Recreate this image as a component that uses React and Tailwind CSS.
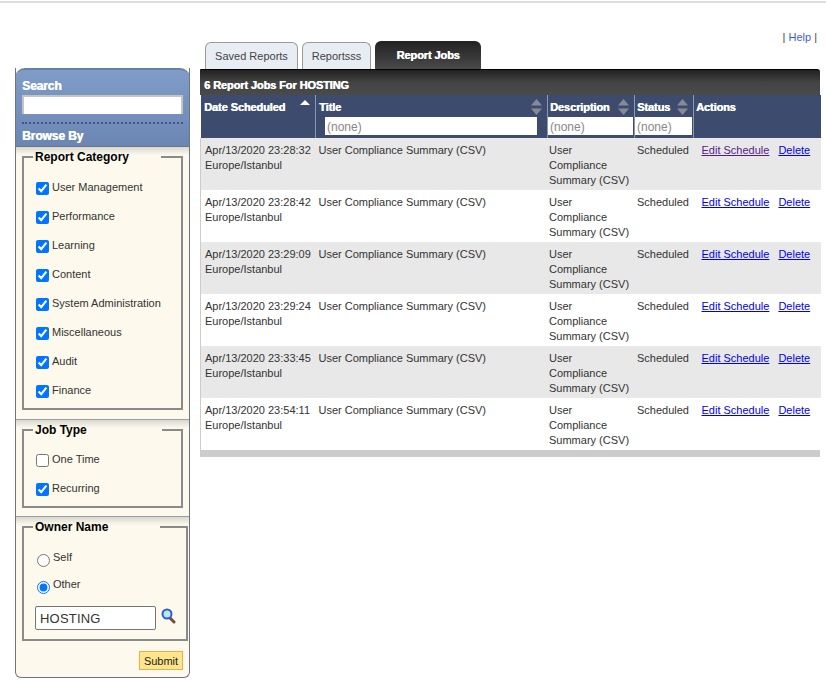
import React from "react";

function Check({ label, checked }) {
  return (
    <label className="flex items-start h-[29px] text-[11px] leading-[13px] text-[#333]">
      <input type="checkbox" defaultChecked={checked} className="w-[13px] h-[13px] m-0 mr-[3px] shrink-0 accent-[#0075ff]" />
      <span className="-mt-[1px]">{label}</span>
    </label>
  );
}
function Field({ title, className, legendClass, children }) {
  return (
    <fieldset className={"border-2 border-[#8a8a8a] border-solid ml-[6px] " + className}>
      <legend className={"pl-[2px] text-[12px] leading-[14px] font-bold text-black " + legendClass}>{title}</legend>
      {children}
    </fieldset>
  );
}
function Band({ className }) {
  return <div className={"h-[9px] -mb-[5px] border-t bg-gradient-to-b from-[#d8d8d0] to-[#fdf9ec] " + className} />;
}
function SortArrows() {
  return (
    <svg width="11" height="16" viewBox="0 0 11 16" className="absolute right-[5px] top-[4px]">
      <path d="M5.5 0L11 6.5H0Z" fill="#858a94" />
      <path d="M0 9.5H11L5.5 16Z" fill="#858a94" />
    </svg>
  );
}
const rows = ["23:28:32", "23:28:42", "23:29:09", "23:29:24", "23:33:45", "23:54:11"];
const hText = "text-white text-[11px] font-bold leading-[13px] tracking-[-0.1px] [text-shadow:0.5px_0_0_#ffffff]";
const filter = "h-[18px] bg-white px-[2px] text-[12px] leading-[20px] text-[#888] font-normal";

export default function App() {
  return (
    <div className="relative w-[826px] h-[680px] overflow-hidden bg-white [font-family:'Liberation_Sans',Arial,sans-serif]">
      <div className="h-[2px] mt-[1px] bg-[#dedede]" />
      <div className="flex items-start pl-[15px] pr-[6px]">
        <aside className="mt-[65px] w-[175px] shrink-0 h-[610px] border-x border-b border-[#6f7388] rounded-b-[6px] bg-[#fdf9ec] overflow-hidden">
          <div className="-mx-px h-[78px] bg-gradient-to-b from-[#7f9dc8] to-[#6b86b2] rounded-t-[10px] border-t-2 border-[#6a7fa6] px-[7px] pt-[9px] text-white text-[12px] font-bold leading-[14px] tracking-[-0.1px] [text-shadow:0.5px_0_0_#ffffff]">
            <div>Search</div>
            <input className="block w-[161px] h-[19px] mt-[2px] bg-white border-2 border-b-0 border-[#c4c4c4] outline-none" />
            <div className="mt-[8px] border-t-2 border-dotted border-[#3f5580]" />
            <div className="mt-[5px]">Browse By</div>
          </div>
          <Band className="border-[#6f7388]" />
          <Field title="Report Category" legendClass="-ml-[3px] pr-[32px]" className="w-[161px] h-[260px] pl-[12px] pt-[18px]">
            {["User Management", "Performance", "Learning", "Content", "System Administration", "Miscellaneous", "Audit", "Finance"].map((c) => (
              <Check key={c} label={c} checked />
            ))}
          </Field>
          <div className="mt-[9px]"><Band className="border-[#9a9ca8]" /></div>
          <Field title="Job Type" legendClass="-ml-[3px] pr-[75px]" className="w-[161px] h-[85px] pl-[12px] pt-[17px]">
            <Check label="One Time" />
            <Check label="Recurring" checked />
          </Field>
          <div className="mt-[8px]"><Band className="border-[#9a9ca8]" /></div>
          <Field title="Owner Name" legendClass="-ml-[4px] pr-[52px]" className="w-[166px] h-[121px] pl-[13px] pt-[18px]">
            <label className="flex items-start h-[27px] text-[11px] leading-[13px] text-[#333]">
              <input type="radio" name="o" className="w-[13px] h-[13px] m-0 mt-[2px] mr-[3px] accent-[#0075ff]" />
              <span className="-mt-[1px]">Self</span>
            </label>
            <label className="flex items-start h-[26px] text-[11px] leading-[13px] text-[#333]">
              <input type="radio" name="o" defaultChecked className="w-[13px] h-[13px] m-0 mt-[2px] mr-[3px] accent-[#0075ff]" />
              <span className="-mt-[1px]">Other</span>
            </label>
            <div className="flex items-start -ml-[2px] mt-[1px]">
              <input defaultValue="HOSTING" className="w-[121px] h-[24px] bg-white border border-[#767676] rounded-[2px] px-[4px] text-[13px] tracking-[0.2px] text-[#333] outline-none" />
              <svg width="15" height="16" viewBox="0 0 15 16" className="ml-[5px] mt-[2px]">
                <path d="M9 10l4 4" stroke="#7a4a3a" strokeWidth="3" strokeLinecap="round" />
                <circle cx="6" cy="6" r="4.5" fill="#bfe4ff" stroke="#2a5fd0" strokeWidth="2" />
              </svg>
            </div>
          </Field>
          <div className="flex justify-end pr-[6px] pt-[10px]">
            <button className="w-[44px] h-[19px] bg-[#ffe68c] border border-[#e8b04c] text-[11px] leading-[18px] text-[#222]">Submit</button>
          </div>
        </aside>
        <main className="ml-[10px] flex-1 min-w-0">
          <div className="flex justify-end h-[38px] pt-[28px] pr-[3px] text-[11px] leading-[13px] text-[#444]">
            <span>|&nbsp;<a className="text-[#3f5fbf]">Help</a>&nbsp;|</span>
          </div>
          <div className="flex items-end h-[28px] pl-[5px]">
            <div className="w-[93px] h-[27px] mr-[4px] border border-b-0 border-[#9a9a9a] rounded-t-[6px] bg-[#e8edf3] text-center text-[11px] leading-[27px] text-[#444]">Saved Reports</div>
            <div className="w-[69px] h-[27px] mr-[4px] border border-b-0 border-[#9a9a9a] rounded-t-[6px] bg-[#e8edf3] text-center text-[11px] leading-[27px] text-[#444]">Reportsss</div>
            <div className="w-[106px] h-[28px] rounded-t-[6px] bg-gradient-to-b from-[#222] to-[#4a4a4a] text-center text-white font-bold text-[11px] leading-[28px] tracking-[-0.1px] [text-shadow:0.5px_0_0_#ffffff]">Report Jobs</div>
          </div>
          <div className="w-[620px] h-[26px] rounded-tr-[3px] rounded-tl-[1px] bg-gradient-to-b from-[#222] via-[#444] to-[#4a4a4a] border-t border-black px-[4px] pt-[9px] text-white font-bold text-[11px] leading-[13px] tracking-[-0.1px] [text-shadow:0.5px_0_0_#ffffff]">6 Report Jobs For HOSTING</div>
          <table className="w-[620px] table-fixed border-collapse">
            <colgroup>
              <col className="w-[115px]" />
              <col className="w-[232px]" />
              <col className="w-[87px]" />
              <col className="w-[59px]" />
              <col className="w-[127px]" />
            </colgroup>
            <thead>
              <tr className="h-[43px] bg-[#3d4c6e] align-top">
                <th className="relative text-left pl-[3.5px] pt-[6px] border-r border-[#8d97ae]">
                  <div className={hText}>Date Scheduled</div>
                  <svg width="10" height="5" viewBox="0 0 10 5" className="absolute right-[5px] top-[5px]"><path d="M5 0L10 5H0Z" fill="#fff" /></svg>
                </th>
                <th className="relative text-left pl-[3px] pt-[6px] border-r border-[#8d97ae]">
                  <div className={hText}>Title</div>
                  <SortArrows />
                  <div className={filter + " w-[212px] ml-[6px] mt-[3px]"}>(none)</div>
                </th>
                <th className="relative text-left pl-[2px] pt-[6px] border-r border-[#8d97ae]">
                  <div className={hText}>Description</div>
                  <SortArrows />
                  <div className={filter + " w-[85px] -ml-[2px] mt-[3px]"}>(none)</div>
                </th>
                <th className="relative text-left pl-[2px] pt-[6px] border-r border-[#8d97ae]">
                  <div className={hText}>Status</div>
                  <SortArrows />
                  <div className={filter + " w-[57px] -ml-[2px] mt-[3px]"}>(none)</div>
                </th>
                <th className="text-left pl-[2px] pt-[6px]">
                  <div className={hText}>Actions</div>
                </th>
              </tr>
            </thead>
            <tbody>
              {rows.map((t, i) => (
                <tr key={t} className={"h-[52px] align-top text-[11px] leading-[15px] text-[#333] " + (i % 2 === 0 ? "bg-[#e8e8e8]" : "bg-white")}>
                  <td className="pl-[4px] pt-[5px] border-l border-[#cccccc]">Apr/13/2020 {t}<br />Europe/Istanbul</td>
                  <td className="pl-[3px] pt-[5px]">User Compliance Summary (CSV)</td>
                  <td className="pl-[1.5px] pr-[5px] pt-[5px]">User Compliance Summary (CSV)</td>
                  <td className="pl-[2.5px] pt-[5px]">Scheduled</td>
                  <td className="pl-[8px] pt-[5px] whitespace-nowrap">
                    <a className={"underline " + (i === 0 ? "text-[#551a8b]" : "text-[#0000ee]")}>Edit Schedule</a>
                    <a className="underline text-[#0000ee] ml-[9px]">Delete</a>
                  </td>
                </tr>
              ))}
            </tbody>
          </table>
          <div className="w-[620px] h-[7px] bg-[#cccccc]" />
        </main>
      </div>
    </div>
  );
}
